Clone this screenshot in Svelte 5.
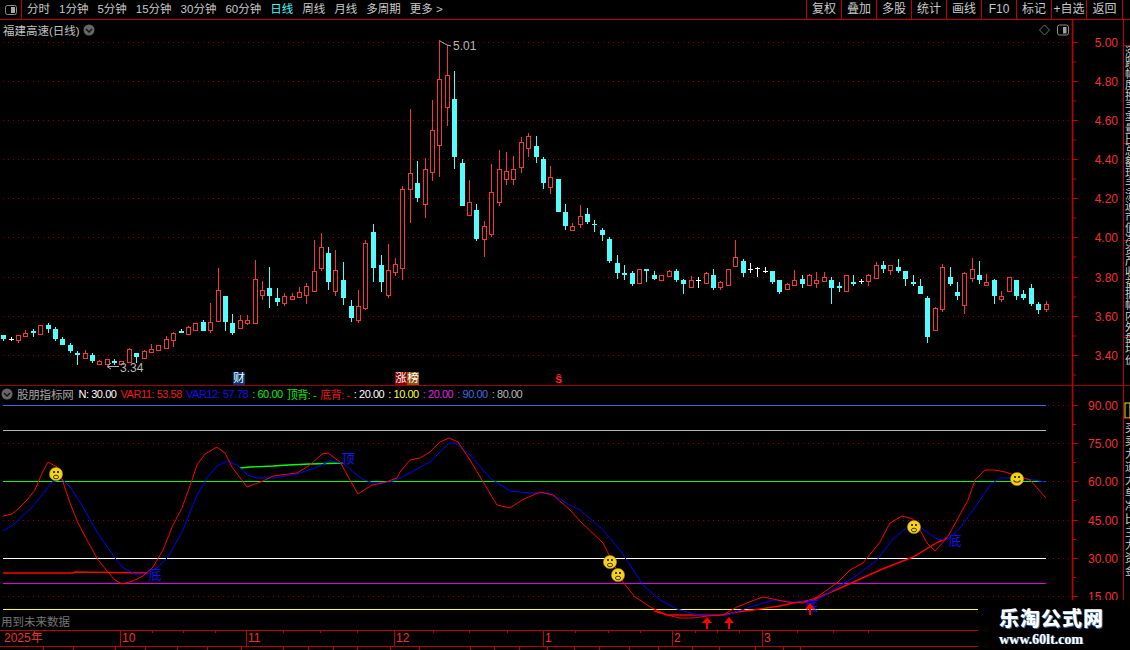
<script>
  const tabs = [
    { t: '分时' }, { t: '1分钟' }, { t: '5分钟' }, { t: '15分钟' }, { t: '30分钟' }, { t: '60分钟' },
    { t: '日线', on: true }, { t: '周线' }, { t: '月线' }, { t: '多周期' }, { t: '更多 >' }
  ];
  const buttons = ['复权', '叠加', '多股', '统计', '画线', 'F10', '标记', '+自选', '返回'];

  // first stretch measured from a 3x crop: [x, high, top, bottom, low, kind]
  const early = [
    [3,315,315,327,332,'c'],[11,320,326,328,332,'w'],[18,316,316,329,339,'r'],[25,300,310,317,320,'r'],
    [33,297,302,309,320,'c'],[40,286,286,312,315,'r'],[48,279,285,297,308,'c'],[55,292,297,327,333,'c'],
    [62,321,327,345,345,'c'],[70,339,345,363,369,'c'],[77,363,369,374,405,'c'],[85,360,369,384,387,'r'],
    [92,369,375,393,399,'c'],[99,391,393,401,404,'r'],[107,387,388,401,404,'r'],[114,387,393,399,405,'c'],
    [121,392,393,401,404,'r'],[129,355,357,395,396,'r'],[136,369,369,381,399,'c'],[144,361,363,383,384,'r'],
    [151,342,357,366,370,'r'],[158,345,346,360,363,'r'],[166,318,327,353,357,'r'],[173,306,309,329,351,'r'],
    [181,297,303,309,309,'c'],[188,289,291,311,312,'r'],[195,279,279,300,300,'r'],[203,270,276,303,303,'c'],
    [210,219,276,300,309,'r'],[218,114,180,273,273,'r'],[225,198,198,276,303,'c'],[232,252,279,309,315,'c'],
    [240,255,270,293,294,'r'],[247,255,270,279,285,'r'],[255,90,147,278,278,'r'],[262,153,180,195,210,'r'],
    [269,111,174,198,234,'c'],[277,174,204,216,228,'c'],[284,189,198,219,228,'r'],[292,189,198,206,210,'r'],
    [299,171,186,201,201,'r'],[306,159,168,194,222,'r'],[314,30,123,182,183,'r'],[321,9,52,113,123,'r'],
    [328,51,69,156,180,'c']
  ].map(([x, h, t, b, l, k]) => [x, 230 + h / 3, 230 + t / 3, 230 + b / 3, 230 + l / 3, k]);

  const rest = [
    [335,250,270,291,296,'r'],[343,262,280,298,305,'c'],[351,300,306,318,322,'c'],[358,290,306,320,323,'r'],
    [365,240,243,308,310,'r'],[373,224,232,268,282,'c'],[381,255,265,282,292,'c'],[388,244,270,295,298,'r'],
    [395,258,264,272,276,'r'],[402,186,189,268,280,'r'],[410,109,173,189,223,'r'],[417,161,183,198,202,'c'],
    [425,158,169,204,218,'r'],[432,100,130,172,181,'r'],[439,40,79,145,177,'r'],[447,45,75,107,126,'r'],
    [454,71,99,157,169,'c'],[462,159,163,206,206,'c'],[469,180,202,215,216,'r'],[476,204,210,239,241,'c'],
    [484,221,226,239,257,'r'],[491,164,192,234,237,'r'],[499,150,169,202,206,'r'],[506,152,171,179,185,'r'],
    [513,156,169,179,185,'r'],[521,137,142,167,173,'r'],[528,133,136,148,157,'r'],[536,136,146,157,163,'c'],
    [543,157,159,183,189,'c'],[550,166,177,187,194,'r'],[558,179,179,212,212,'c'],[565,204,212,226,230,'c'],
    [572,223,226,230,231,'r'],[580,205,216,224,228,'r'],[587,208,214,222,224,'c'],[594,220,224,225,232,'c'],
    [602,228,230,235,241,'c'],[609,237,239,261,263,'c'],[617,255,263,273,279,'c'],[624,265,273,275,280,'c'],
    [632,271,273,284,286,'c'],[639,269,269,283,284,'r'],[646,269,269,271,282,'c'],[654,271,275,279,280,'c'],
    [661,275,275,280,280,'r'],[669,270,271,276,277,'r'],[676,269,271,280,282,'c'],[683,279,280,284,294,'c'],
    [691,276,280,287,287,'r'],[698,277,280,281,288,'w'],[706,272,273,283,284,'r'],[713,269,275,288,290,'c'],
    [720,281,282,287,290,'r'],[728,269,269,285,286,'r'],[735,240,257,266,266,'r'],[743,259,261,273,277,'c'],
    [750,263,269,270,273,'w'],[757,267,268,269,277,'w'],[765,267,271,272,273,'w'],[772,271,271,282,284,'c'],
    [779,280,280,292,294,'c'],[787,283,284,289,289,'r'],[794,270,280,285,286,'r'],[802,275,279,284,288,'c'],
    [809,274,275,285,286,'r'],[816,272,280,283,288,'r'],[824,272,277,281,281,'r'],[831,277,280,288,304,'c'],
    [839,282,286,288,292,'c'],[846,275,275,291,292,'r'],[853,275,282,284,286,'c'],[861,279,281,282,284,'w'],
    [868,274,275,281,286,'r'],[876,262,265,278,278,'r'],[883,261,265,269,273,'c'],[890,265,265,270,275,'r'],
    [898,259,267,271,273,'c'],[905,271,271,279,286,'c'],[913,275,282,284,286,'c'],[920,279,286,294,294,'c'],
    [927,296,298,337,343,'c'],[935,307,308,330,331,'r'],[942,264,267,309,312,'r'],[950,267,277,284,286,'c'],
    [957,282,292,296,300,'c'],[964,272,273,305,314,'r'],[972,258,269,278,282,'r'],[979,261,275,280,284,'c'],
    [986,274,282,285,286,'r'],[994,279,280,296,304,'c'],[1001,291,296,299,302,'r'],[1009,277,277,291,292,'r'],
    [1016,280,280,296,300,'c'],[1023,290,294,298,300,'c'],[1031,284,288,304,306,'c'],[1038,302,304,310,314,'c'],
    [1046,301,304,309,312,'r']
  ];

  const candles = [...early, ...rest].map(([x, h, t, b, l, k]) => ({
    x, h: Math.round(h), t: Math.round(t), b: Math.round(b), l: Math.round(l), k
  }));

  const priceTicks = [
    ['5.00', 42], ['4.80', 81], ['4.60', 120], ['4.40', 159], ['4.20', 198],
    ['4.00', 237], ['3.80', 277], ['3.60', 316], ['3.40', 355]
  ];
  const subTicks = [
    ['90.00', 405], ['75.00', 443], ['60.00', 481], ['45.00', 520], ['30.00', 558], ['15.00', 596]
  ];
  const levels = [
    { y: 405.5, c: '#4169e1', x2: 1046 }, { y: 430.5, c: '#b4b4b4', x2: 1046 },
    { y: 481.5, c: '#00ff00', x2: 1046 }, { y: 558.5, c: '#ffffff', x2: 1046 },
    { y: 583.5, c: '#e000e0', x2: 1046 }, { y: 609.5, c: '#ffff40', x2: 978 }
  ];

  const red = '3,516 12,514 18,509 27,500 35,490 42,473 48,462 57,467 63,482 70,503 78,523 87,540 98,560 108,572 115,580 122,584 133,581 143,576 153,567 163,550 173,525 182,508 192,480 197,465 205,454 217,447 225,453 232,467 247,487 263,481 273,476 297,473 310,465 322,454 328,453 340,462 350,480 358,494 372,485 383,483 397,478 400,472 410,460 420,458 430,452 440,442 449,438 458,442 470,460 482,480 497,505 510,508 522,500 540,492 553,495 570,510 580,521 603,543 610,557 623,582 635,597 652,608 667,615 680,618 693,618 707,616 723,615 737,607 757,599 763,597 773,599 787,602 803,603 817,597 837,583 850,570 863,563 880,542 890,523 902,516 913,519 920,530 927,543 935,551 947,538 957,520 968,500 975,480 985,470 995,470 1005,472 1018,476 1030,480 1046,498';
  const blue = '3,531 13,525 32,507 42,495 52,482 62,479 70,487 83,507 97,532 115,558 122,567 135,574 147,574 157,568 168,557 183,530 197,495 207,478 217,466 227,461 237,465 248,475 257,478 273,478 297,474 317,467 330,461 343,463 353,472 362,479 373,483 390,482 400,478 415,470 430,462 449,443 455,443 470,455 490,478 510,491 530,493 550,493 570,505 580,510 603,530 620,550 643,585 660,600 677,609 697,615 727,615 747,608 773,600 793,602 813,602 830,592 857,575 877,560 892,540 910,525 920,527 937,539 947,540 960,528 980,500 990,485 1000,478 1020,478 1046,482';
  const trend = '654,611 668,615 723,615 737,612 753,610 780,606 793,603 813,600 847,585 880,570 913,557 938,542 947,538';
  const flat = '3,573 73,573 74,572 147,573';
  const green = '240,468 250,467 273,466 288,465 310,464 343,463';

  const faces = [
    { x: 56, y: 474 }, { x: 610, y: 562 }, { x: 618, y: 575 }, { x: 914, y: 527 }, { x: 1017, y: 479, happy: true }
  ];
  const arrows = [{ x: 707, y: 617 }, { x: 729, y: 617 }, { x: 810, y: 603 }];
  const marks = [{ x: 155, y: 579, t: '底' }, { x: 348, y: 463, t: '顶' }, { x: 812, y: 610, t: '底' }, { x: 955, y: 545, t: '底' }];

  const months = [
    { x: 120, t: '10' }, { x: 246, t: '11' }, { x: 394, t: '12' }, { x: 543, t: '1' }, { x: 672, t: '2' }, { x: 762, t: '3' }
  ];
  const minor = [152, 183, 215, 283, 320, 357, 433, 469, 507, 575, 608, 640, 695, 717, 739, 797, 833, 868];
  const lower = [43, 73, 115, 145, 177, 207, 241, 283, 308, 333, 357, 390, 419, 470, 494, 519, 547, 574, 599, 629, 658, 692, 719, 755, 783, 800];

  const sideTop = '涨跌幅度换手率量比总额现手流通市值净资产收益振幅内外盘均价'.split('');
  const sideLow = '买卖力道大单净比主力资金'.split('');
</script>

{#snippet panelIcon(x, y)}
  <rect x={x + 0.5} {y} width="11" height="10" rx="2" fill="none" stroke="#8c8c8c" />
  <rect x={x + 6} y={y + 2} width="3.5" height="6.5" fill="#a0a0a0" />
{/snippet}

{#snippet chevron(x, y)}
  <circle cx={x} cy={y} r="5.5" fill="#666" />
  <path d="M{x - 3} {y - 1} L{x} {y + 2} L{x + 3} {y - 1}" fill="none" stroke="#111" stroke-width="1.4" />
{/snippet}

<div class="app">
  <header class="toolbar">
    <div class="toggle">
      <svg width="14" height="12" viewBox="0 0 14 12"><rect x="1.5" y="1.5" width="11" height="9" rx="2" fill="none" stroke="#8c8c8c" /><rect x="7" y="3" width="4" height="6" fill="#a8a8a8" /></svg>
    </div>
    <nav class="tabs">
      {#each tabs as tab}
        <span class:on={tab.on}>{tab.t}</span>
      {/each}
    </nav>
    <div class="buttons">
      {#each buttons as b}
        <span>{b}</span>
      {/each}
    </div>
  </header>

  <section class="price">
    <svg class="canvas" viewBox="0 20 1130 365" width="1130" height="365">
      <defs><clipPath id="sideA"><rect x="1124" y="20" width="6" height="365" /></clipPath></defs>
      {#each priceTicks as [label, y]}
        <line x1="3" x2="1072" y1={y + 0.5} y2={y + 0.5} class="grid" />
        <line x1="1073" x2="1078" y1={y + 0.5} y2={y + 0.5} class="axis" />
        <line x1="1073" x2="1076" y1={y + 20} y2={y + 20} class="axis" />
        <text x="1118" y={y + 4.5} class="scale">{label}</text>
      {/each}
      <line x1="1072.5" x2="1072.5" y1="20" y2="385" class="axis axis-main" />
      <line x1="1123.5" x2="1123.5" y1="20" y2="385" class="axis" />
      <line x1="1123" x2="1130" y1="45.5" y2="45.5" class="axis" />
      <line x1="1123" x2="1130" y1="143.5" y2="143.5" class="axis" />
      <line x1="1123" x2="1130" y1="240.5" y2="240.5" class="axis" />
      <line x1="1123" x2="1130" y1="337.5" y2="337.5" class="axis" />
      <g clip-path="url(#sideA)">
        {#each sideTop as ch, i}
          <text x="1125" y={56 + i * 11} class="side">{ch}</text>
        {/each}
      </g>

      {#each candles as c}
        <line x1={c.x + 0.5} x2={c.x + 0.5} y1={c.h} y2={c.l} class="wick {c.k}" />
        {#if c.k === 'r'}
          <rect x={c.x - 1.5} y={c.t + 0.5} width="4" height={Math.max(c.b - c.t, 2)} class="hollow" />
        {:else}
          <rect x={c.x - 2} y={c.t} width="5" height={Math.max(c.b - c.t, 1)} class="solid {c.k}" />
        {/if}
      {/each}

      <path d="M440 41 L447 45 L451 46" class="note" />
      <text x="453" y="50" class="tip">5.01</text>
      <path d="M119 366.5 H108 M111 363 L107 366.5 L111 369" class="note" />
      <text x="120" y="372" class="tip">3.34</text>
    </svg>

    <div class="title">
      <span>福建高速(日线)</span>
      <svg width="14" height="14" viewBox="82 22 14 14">{@render chevron(89, 29)}</svg>
      <span class="grow"></span>
      <svg width="30" height="14" viewBox="1039 22 30 14">
        <path d="M1044.5 24 L1049.5 29 L1044.5 34 L1039.5 29 Z" fill="none" stroke="#707070" />
        {@render panelIcon(1057, 24)}
      </svg>
    </div>

    <div class="events">
      <span class="badge cai">财</span>
      <span class="pair"><span class="badge zhang">涨</span><span class="badge bang">榜</span></span>
      <span class="hat">ŝ</span>
    </div>
  </section>

  <section class="indicator">
    <svg class="canvas" viewBox="0 386 1130 244" width="1130" height="244">
      <defs><clipPath id="sideB"><rect x="1124" y="386" width="6" height="244" /></clipPath></defs>
      {#each subTicks as [label, y]}
        <line x1="3" x2="1072" y1={y + 0.5} y2={y + 0.5} class="grid" />
        <line x1="1073" x2="1078" y1={y + 0.5} y2={y + 0.5} class="axis" />
        {#if y < 590}<line x1="1073" x2="1076" y1={y + 19.5} y2={y + 19.5} class="axis" />{/if}
        <text x="1118" y={y + 4.5} class="scale">{label}</text>
      {/each}
      {#each levels as l}
        <line x1="3" x2={l.x2} y1={l.y} y2={l.y} stroke={l.c} />
      {/each}
      <line x1="1072.5" x2="1072.5" y1="386" y2="600" class="axis axis-main" />
      <line x1="1123.5" x2="1123.5" y1="386" y2="600" class="axis" />
      <rect x="1125" y="403" width="5" height="15" fill="none" stroke="#e8e800" />
      <line x1="1123" x2="1130" y1="418.5" y2="418.5" class="axis" />
      <g clip-path="url(#sideB)">
        {#each sideLow as ch, i}
          <text x="1125" y={432 + i * 13} class="side">{ch}</text>
        {/each}
      </g>

      <polyline points={flat} class="curve" stroke="#ff0000" stroke-width="1.4" />
      <polyline points={trend} class="curve" stroke="#ff0000" stroke-width="1.4" />
      <polyline points={green} class="curve" stroke="#00ff00" stroke-width="1.4" />
      <polyline points={blue} class="curve" stroke="#0000ff" />
      <polyline points={red} class="curve" stroke="#ff0000" />

      {#each marks as m}
        <text x={m.x} y={m.y} class="mark">{m.t}</text>
      {/each}

      {#each arrows as a}
        <path d="M{a.x} {a.y} L{a.x + 5} {a.y + 6} H{a.x + 1} V{a.y + 12} H{a.x - 1} V{a.y + 6} H{a.x - 5} Z" fill="#ff0000" />
      {/each}

      {#each faces as f}
        <circle cx={f.x} cy={f.y} r="6.6" fill="#f4d218" stroke="#a88a10" stroke-width="0.6" />
        <rect x={f.x - 3} y={f.y - 3} width="2" height="2" fill="#4a3a00" />
        <rect x={f.x + 1} y={f.y - 3} width="2" height="2" fill="#4a3a00" />
        {#if f.happy}
          <path d="M{f.x - 3.5} {f.y + 1.5} Q{f.x} {f.y + 5} {f.x + 3.5} {f.y + 1.5}" fill="none" stroke="#4a3a00" stroke-width="1.1" />
        {:else}
          <ellipse cx={f.x} cy={f.y + 3} rx="2.6" ry="1.8" fill="none" stroke="#4a3a00" />
        {/if}
      {/each}
    </svg>

    <div class="legend">
      <svg width="12" height="12" viewBox="0 388 12 12">{@render chevron(6, 394)}</svg>
      <span class="name">股朋指标网</span>
      <span class="white">N: 30.00</span>
      <span class="red">VAR11: 53.58</span>
      <span class="blue">VAR12: 57.78</span>
      <span class="green">: 60.00</span>
      <span class="green">顶背: -</span>
      <span class="red">底背: -</span>
      <span class="white">: 20.00</span>
      <span class="yellow">: 10.00</span>
      <span class="magenta">: 20.00</span>
      <span class="royal">: 90.00</span>
      <span class="grey">: 80.00</span>
    </div>

    <div class="note-future">用到未来数据</div>
  </section>

  <footer class="timeline">
    <svg class="canvas" viewBox="0 630 1130 20" width="1130" height="20">
      <line x1="0" x2="978" y1="630.5" y2="630.5" class="axis" />
      <line x1="0" x2="978" y1="646.5" y2="646.5" class="axis" />
      {#each minor as x}
        <line x1={x + 0.5} x2={x + 0.5} y1="631" y2="633" class="axis" />
      {/each}
      {#each months as m}
        <line x1={m.x + 0.5} x2={m.x + 0.5} y1="631" y2="646" class="axis" />
      {/each}
      {#each lower as x}
        <line x1={x + 0.5} x2={x + 0.5} y1="647" y2="650" class="axis" />
      {/each}
    </svg>
    <div class="months">
      <span class="first">2025年</span>
      {#each months as m}
        <span class="month" style:left="{m.x + 2}px">{m.t}</span>
      {/each}
    </div>
  </footer>

  <aside class="brand">
    <strong>乐淘公式网</strong>
    <em>www.60lt.com</em>
  </aside>
</div>

<style>
  :global(body) {
    margin: 0;
    background: #000;
  }

  .app {
    position: relative;
    display: flex;
    flex-direction: column;
    width: 1130px;
    height: 650px;
    overflow: hidden;
    background: #000;
    color: #c8c8c8;
    font-family: "Liberation Sans", "Noto Sans CJK SC", sans-serif;
    font-size: 11px;
  }

  .toolbar {
    display: flex;
    align-items: stretch;
    height: 20px;
    flex: none;
    box-sizing: border-box;
    border-bottom: 1px solid #c00000;
    line-height: 19px;
  }

  .toggle {
    display: flex;
    align-items: center;
    justify-content: center;
    width: 21px;
    border-right: 1px solid #c00000;
  }

  .tabs {
    display: flex;
    gap: 9px;
    padding-left: 5px;
    font-size: 11.5px;
  }

  .tabs .on {
    color: #40f8ff;
  }

  .buttons {
    display: flex;
    margin-left: auto;
    font-size: 12px;
  }

  .buttons span {
    width: 35px;
    box-sizing: border-box;
    border-left: 1px solid #c00000;
    text-align: center;
    white-space: nowrap;
  }

  .buttons span:last-child {
    width: 37px;
    border-right: 1px solid #c00000;
    margin-right: 7px;
  }

  .price,
  .indicator,
  .timeline {
    position: relative;
    flex: none;
  }

  .price {
    height: 365px;
  }

  .indicator {
    height: 245px;
    box-sizing: border-box;
    border-top: 1px solid #a00000;
  }

  .timeline {
    height: 20px;
  }

  .canvas {
    position: absolute;
    inset: 0;
    display: block;
  }

  .title {
    position: relative;
    display: flex;
    align-items: center;
    gap: 2px;
    height: 18px;
    padding: 1px 61px 0 3px;
    font-size: 11.5px;
    color: #c0c0c0;
  }

  .grow {
    flex: 1;
  }

  .events {
    position: absolute;
    left: 233px;
    top: 351px;
    display: flex;
    align-items: center;
    width: 340px;
    height: 14px;
  }

  .badge {
    display: inline-block;
    width: 12px;
    height: 13px;
    line-height: 13px;
    text-align: center;
    color: #fff;
    font-size: 11.5px;
  }

  .cai { background: #003a70; }
  .zhang { background: #8c0000; }
  .bang { background: #8c5212; }

  .pair {
    display: flex;
    margin-left: 150px;
    width: 24px;
  }

  .hat {
    margin-left: 136px;
    color: #ff2020;
    font-size: 13px;
    font-weight: 700;
    line-height: 13px;
  }

  .legend {
    position: relative;
    display: flex;
    align-items: center;
    gap: 4px;
    height: 15px;
    padding-left: 1px;
    font-size: 11px;
    letter-spacing: -0.45px;
    white-space: nowrap;
  }

  .legend .name { font-size: 11.5px; letter-spacing: -0.2px; color: #a8a8a8; margin-right: 1px; }
  .white { color: #fff; }
  .red { color: #f01818; }
  .blue { color: #1010f0; }
  .green { color: #10e810; }
  .yellow { color: #ffff30; }
  .magenta { color: #e020e0; }
  .royal { color: #4169e1; }
  .grey { color: #b8b8b8; }

  .note-future {
    position: absolute;
    left: 1px;
    bottom: 0;
    font-size: 11.5px;
    line-height: 16px;
    color: #767676;
  }

  .months {
    position: absolute;
    inset: 0 0 4px 0;
    color: #f03030;
    font-size: 12px;
    line-height: 16px;
  }

  .first {
    position: absolute;
    left: 4px;
  }

  .month {
    position: absolute;
  }

  .brand {
    position: absolute;
    right: 0;
    bottom: 0;
    display: flex;
    flex-direction: column;
    width: 152px;
    height: 50px;
    box-sizing: border-box;
    padding: 8px 0 0 21px;
    background: #000;
    color: #fff;
    font-family: "Liberation Serif", "Noto Sans CJK SC", serif;
    font-weight: 700;
  }

  .brand strong {
    font-size: 20px;
    line-height: 22px;
    letter-spacing: 1px;
    text-shadow: 1px 1px 0 #3a6ea8;
  }

  .brand em {
    font-style: normal;
    font-size: 14px;
    line-height: 19px;
    text-shadow: 1px 0 0 #4a78a8;
  }

  .grid {
    stroke: #900000;
    stroke-dasharray: 1 4;
  }

  .axis {
    stroke: #c00000;
  }

  .axis-main {
    stroke-width: 1.6;
  }

  .scale {
    fill: #f03030;
    font-size: 12px;
    text-anchor: end;
  }

  .side {
    fill: #d0d0d0;
    font-size: 11px;
  }

  .wick {
    shape-rendering: crispEdges;
  }

  .wick.r { stroke: #f03838; }
  .wick.c { stroke: #54fcfc; }
  .wick.w { stroke: #fff; }

  .hollow {
    fill: #000;
    stroke: #f03838;
    shape-rendering: crispEdges;
  }

  .solid {
    shape-rendering: crispEdges;
  }

  .solid.c { fill: #54fcfc; }
  .solid.w { fill: #fff; }

  .note {
    fill: none;
    stroke: #b0b0b0;
  }

  .tip {
    fill: #b8b8b8;
    font-size: 12px;
  }

  .curve {
    fill: none;
  }

  .mark {
    fill: #1414f0;
    font-size: 13px;
    text-anchor: middle;
  }
</style>
